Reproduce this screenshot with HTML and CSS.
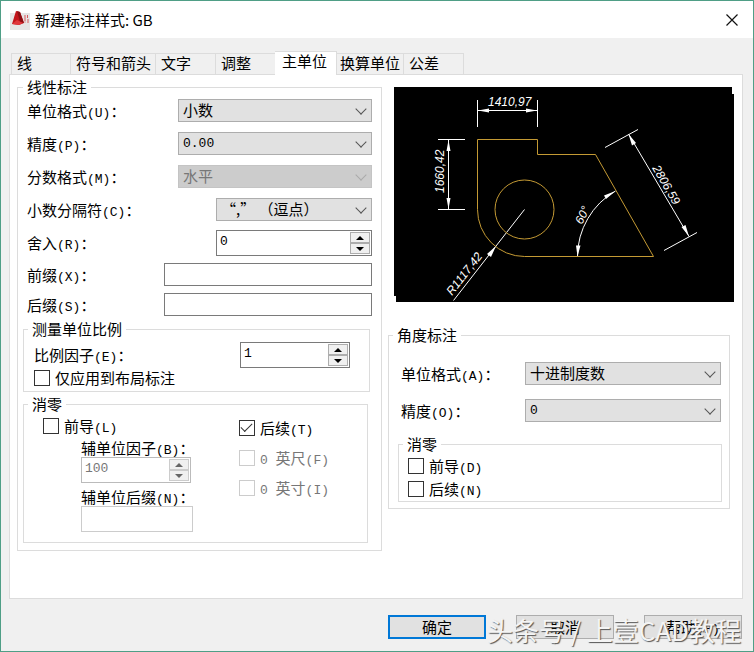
FILE: index.html
```html
<!DOCTYPE html>
<html lang="zh-CN">
<head>
<meta charset="utf-8">
<title>新建标注样式: GB</title>
<link rel="stylesheet" href="styles.css">
</head>
<body>
<main class="window">
  <header class="titlebar">
    <svg class="logo" viewBox="0 0 20 20" aria-hidden="true">
      <rect y="3" width="20" height="17" fill="#e6e6e6"/>
      <path d="M2 14 6 1l4 1 4 11-5 2z" fill="#c3151b"/>
      <path d="M7 1l3 1 4 11-4-1z" fill="#8d0f14"/>
      <path d="M2 14l5-4 6 3-4 2z" fill="#e0373c"/>
      <path d="M14 6h2M17.500 5v3M14 8h2M14 10h2M17 10h2M14.500 12h1M17 12h2" stroke="#d8585b" fill="none"/>
    </svg>
    <h1>新建标注样式: GB</h1>
    <button class="close" type="button" aria-label="关闭">
      <svg viewBox="0 0 12 12"><path d="M0.5 0.5l11 11M11.5 0.5l-11 11" stroke="#111" stroke-width="1.2"/></svg>
    </button>
  </header>

  <nav class="tabs" role="tablist">
    <button class="tab tab-short" type="button" role="tab">线</button>
    <button class="tab" type="button" role="tab">符号和箭头</button>
    <button class="tab tab-short" type="button" role="tab">文字</button>
    <button class="tab tab-short" type="button" role="tab">调整</button>
    <button class="tab tab-active" type="button" role="tab" aria-selected="true">主单位</button>
    <button class="tab tab-snug" type="button" role="tab">换算单位</button>
    <button class="tab tab-short" type="button" role="tab">公差</button>
  </nav>

  <section class="panel">
    <fieldset class="group linear">
      <legend>线性标注</legend>
      <div class="rows">
        <div class="row"><label for="lu">单位格式<span class="key">(U)</span>：</label>
          <span class="select w-wide"><select id="lu"><option>小数</option></select></span></div>
        <div class="row"><label for="lp">精度<span class="key">(P)</span>：</label>
          <span class="select w-wide"><select id="lp" class="num"><option>0.00</option></select></span></div>
        <div class="row"><label for="lm">分数格式<span class="key">(M)</span>：</label>
          <span class="select w-wide off"><select id="lm" disabled><option>水平</option></select></span></div>
        <div class="row"><label for="lc">小数分隔符<span class="key">(C)</span>：</label>
          <span class="select w-mid"><select id="lc"><option>“,” （逗点）</option></select></span></div>
      </div>
      <div class="rows rows-tight">
        <div class="row"><label for="lr">舍入<span class="key">(R)</span>：</label>
          <span class="spin w-mid"><input id="lr" type="text" value="0"><span class="arrows"><button type="button" class="up" aria-label="增加"></button><button type="button" class="down" aria-label="减少"></button></span></span></div>
        <div class="row"><label for="lx">前缀<span class="key">(X)</span>：</label><input id="lx" class="text w-full" type="text"></div>
        <div class="row"><label for="ls">后缀<span class="key">(S)</span>：</label><input id="ls" class="text w-full" type="text"></div>
      </div>

      <fieldset class="group scale">
        <legend>测量单位比例</legend>
        <div class="row"><label for="se">比例因子<span class="key">(E)</span>：</label>
          <span class="spin w-spin"><input id="se" type="text" value="1"><span class="arrows"><button type="button" class="up" aria-label="增加"></button><button type="button" class="down" aria-label="减少"></button></span></span></div>
        <label class="check"><input type="checkbox"><span>仅应用到布局标注</span></label>
      </fieldset>

      <fieldset class="group zero">
        <legend>消零</legend>
        <div class="zero-body">
          <div>
            <label class="check"><input type="checkbox"><span>前导<span class="key">(L)</span></span></label>
            <div class="sub">
              <label for="zb">辅单位因子<span class="key">(B)</span>：</label>
              <span class="spin w-spin off"><input id="zb" type="text" value="100" disabled><span class="arrows"><button type="button" class="up" aria-label="增加" disabled></button><button type="button" class="down" aria-label="减少" disabled></button></span></span>
            </div>
            <div class="sub">
              <label for="zn">辅单位后缀<span class="key">(N)</span>：</label>
              <input id="zn" class="text tall" type="text" disabled>
            </div>
          </div>
          <div class="zero-right">
            <label class="check"><input type="checkbox" checked><span>后续<span class="key">(T)</span></span></label>
            <label class="check off"><input type="checkbox" disabled><span><span class="key">0&nbsp;</span>英尺<span class="key">(F)</span></span></label>
            <label class="check off"><input type="checkbox" disabled><span><span class="key">0&nbsp;</span>英寸<span class="key">(I)</span></span></label>
          </div>
        </div>
      </fieldset>
    </fieldset>

    <div class="side">
      <figure class="preview">
        <svg viewBox="0 0 340 215" role="img" aria-label="标注预览">
          <path d="M0 0H338V7H340V215H2V209H0Z" fill="#000"/>
          <g fill="none" stroke="#fff">
            <path d="M83.5 13V40M143.5 13V40M84 23.5H143"/>
            <path d="M44 52.5H71M44 122.5H71M54.5 53V122"/>
            <path d="M130.5 122.5L59.5 213.5"/>
            <path d="M183.5 169.5A76 76 0 0 1 221.5 104"/>
            <path d="M211 60.5L244 42.5M270 163.5L303 145.5M234.5 47L295 149.5"/>
          </g>
          <g fill="none" stroke="#c49a34">
            <path d="M83.5 122.5V52.5H143.5V67.5H201.5L259.5 169.5H130.5A47 47 0 0 1 83.5 122.5"/>
            <circle cx="130.5" cy="122.5" r="29.5"/>
          </g>
          <g fill="#fff">
            <path d="M84 23.5l11-2v4zM143 23.5l-11-2v4z"/>
            <path d="M54.5 53l-2 11h4zM54.5 122l-2-11h4z"/>
            <path d="M102 159l-9 8 4 3z"/>
            <path d="M183.5 169.5l-1.500-11h4.500zM221.500 104l-11.500 4.500 2 3.500z"/>
            <path d="M234.500 47l3.500 11.500 4-2.500zM295 149.500l-7.500-9.500 4-2z"/>
          </g>
          <g class="dims">
            <text x="94" y="19">1410,97</text>
            <text transform="translate(50 106) rotate(-90)">1660,42</text>
            <text transform="translate(58 209) rotate(-52)">R1117,42</text>
            <text transform="translate(188 138) rotate(-64)">60°</text>
            <text transform="translate(258 81) rotate(60)">2806,59</text>
          </g>
        </svg>
      </figure>

      <fieldset class="group angle">
        <legend>角度标注</legend>
        <div class="row"><label for="au">单位格式<span class="key">(A)</span>：</label>
          <span class="select w-angle"><select id="au"><option>十进制度数</option></select></span></div>
        <div class="row"><label for="ap">精度<span class="key">(O)</span>：</label>
          <span class="select w-angle"><select id="ap" class="num"><option>0</option></select></span></div>
        <fieldset class="group angle-zero">
          <legend>消零</legend>
          <label class="check"><input type="checkbox"><span>前导<span class="key">(D)</span></span></label>
          <label class="check"><input type="checkbox"><span>后续<span class="key">(N)</span></span></label>
        </fieldset>
      </fieldset>
    </div>
  </section>

  <footer class="actions">
    <button class="btn btn-default" type="button">确定</button>
    <button class="btn" type="button">取消</button>
    <button class="btn" type="button">帮助<span class="key">(H)</span></button>
    <span class="watermark">头条号 / 上壹CAD教程</span>
  </footer>
</main>
</body>
</html>
```
FILE: styles.css
```css
* { box-sizing: border-box; }

body {
  margin: 0;
  color: #000;
  font: 15px/20px "Noto Sans CJK SC", sans-serif;
}

button, input, select {
  margin: 0;
  padding: 0;
  color: inherit;
  font: inherit;
}

.window {
  display: flex;
  flex-direction: column;
  min-height: 100vh;
  border: 1px solid #4f9e86;
  background: #f0f0f0;
}

.titlebar {
  display: flex;
  align-items: center;
  height: 37px;
  padding: 0 15px 0 9px;
  background: #fff;
}

.logo { width: 20px; height: 20px; }

.titlebar h1 {
  flex: 1;
  margin: 0 0 0 5px;
  font-size: 15px;
  font-weight: 400;
}

.close {
  display: flex;
  border: 0;
  background: none;
}

.close svg { width: 12px; height: 12px; }

.tabs {
  display: flex;
  align-items: flex-end;
  height: 36px;
  padding-left: 10px;
}

.tab {
  height: 21px;
  padding: 0 4px 3px 5px;
  border: 1px solid #dcdcdc;
  border-width: 1px 1px 0 0;
  background: #f0f0f0;
  line-height: 17px;
  text-align: left;
  white-space: nowrap;
}

.tab:first-child { border-left-width: 1px; }
.tab-short { width: 60px; }
.tab-snug { padding: 0 3px 3px; }

.tab-active {
  z-index: 1;
  height: 24px;
  margin: 0 0 -1px -1px;
  padding: 0 9px 6px 7px;
  background: #fff;
}

.panel {
  display: grid;
  flex: 1;
  grid-template-columns: 365fr 342fr;
  gap: 6px;
  align-items: start;
  margin: 0 10px 0 8px;
  padding: 2px 12px 40px 7px;
  border: 1px solid #dcdcdc;
  background: #fff;
}

.group {
  min-width: 0;
  margin: 0;
  padding: 0;
  border: 1px solid #dcdcdc;
}

.group > legend { padding: 0 4px; }

.row {
  display: flex;
  align-items: center;
  justify-content: space-between;
}

.key, .num { font-family: "Liberation Mono", monospace; font-size: 13px; }
.key { line-height: 1; }

.linear { padding: 2px 9px 7px; }
.linear > legend { margin-left: -4px; }
.rows { display: grid; gap: 10px; }
.rows-tight { gap: 7px; margin-top: 9px; }

.w-wide { width: 194px; }
.w-mid { width: 156px; }
.w-full { width: 208px; }
.w-spin { width: 110px; }
.w-angle { width: 196px; }

.select { position: relative; }

.select select {
  display: block;
  width: 100%;
  height: 23px;
  padding: 0 20px 2px 4px;
  border: 1px solid #adadad;
  border-radius: 0;
  background: #e1e1e1;
  appearance: none;
}

.select .num { padding-bottom: 0; }

.select::after {
  content: "";
  position: absolute;
  top: 6px;
  right: 7px;
  width: 7px;
  height: 7px;
  border: solid #555;
  border-width: 0 1px 1px 0;
  pointer-events: none;
  transform: rotate(45deg);
}

.select.off select {
  border-color: #c4c4c4;
  background: #ccc;
  color: #777;
  opacity: 1;
}

.select.off::after { border-color: #aaa; }

.text {
  height: 23px;
  padding: 0 4px;
  border: 1px solid #7a7a7a;
  background: #fff;
}

.tall { width: 112px; height: 26px; }
.text:disabled { border-color: #ccc; }

.spin {
  display: flex;
  height: 26px;
  padding: 1px;
  border: 1px solid #7a7a7a;
  background: #fff;
}

.spin input {
  flex: 1;
  min-width: 0;
  padding: 0 0 3px 2px;
  border: 0;
  background: none;
  font-family: "Liberation Mono", monospace;
  font-size: 13px;
}

.arrows {
  display: grid;
  grid-template-rows: 1fr 1fr;
  width: 20px;
}

.arrows button {
  display: grid;
  place-items: center;
  border: 1px solid #adadad;
  background: #f0f0f0;
}

.arrows button::before {
  content: "";
  border: 4px solid transparent;
}

.arrows .up::before { border-top-width: 0; border-bottom-color: #000; }
.arrows .down::before { border-bottom-width: 0; border-top-color: #000; }

.spin.off { border-color: #bbb; }
.spin.off input { color: #777; }
.spin.off button { border-color: #ccc; }
.spin.off .up::before { border-bottom-color: #666; }
.spin.off .down::before { border-top-color: #666; }

.check {
  display: flex;
  align-items: center;
  height: 16px;
}

.check input {
  display: grid;
  place-items: center;
  width: 16px;
  height: 16px;
  margin-right: 5px;
  border: 1px solid #333;
  background: #fff;
  appearance: none;
}

.check input:checked::before {
  content: "";
  width: 10px;
  height: 5px;
  margin-bottom: 4px;
  border: solid #333;
  border-width: 0 0 1px 1px;
  transform: rotate(-45deg);
}

.check.off { color: #777; }
.check.off input { border-color: #ccc; }

.scale {
  margin: 3px 2px 0 -4px;
  padding: 3px 19px 5px 10px;
}

.scale > legend { margin-left: -6px; }
.scale .check { margin-top: 2px; }

.zero {
  margin: 2px 4px 0 -4px;
  padding: 4px 38px 10px 19px;
}

.zero > legend { margin-left: -15px; }

.zero-body {
  display: flex;
  align-items: flex-start;
  justify-content: space-between;
}

.sub {
  display: grid;
  justify-items: start;
  margin: 5px 0 0 38px;
}

.sub label { height: 18px; line-height: 18px; }

.zero-right {
  display: grid;
  gap: 14px;
  margin-top: 2px;
}

.preview { margin: 10px -4px 0 6px; }
.preview svg { display: block; width: 100%; }

.dims {
  fill: #fff;
  font: italic 12px "Liberation Sans Narrow", "Liberation Sans", sans-serif;
}

.angle {
  margin-top: 23px;
  padding: 17px 8px 6px 12px;
}

.angle > legend { margin-left: -8px; }
.angle .row + .row { margin-top: 14px; }

.angle-zero {
  display: grid;
  gap: 7px;
  margin: 12px -1px 0 -3px;
  padding: 4px 9px;
}

.angle-zero > legend { margin-left: -5px; }

.actions {
  position: relative;
  display: flex;
  gap: 30px;
  justify-content: flex-end;
  padding: 16px 11px 12px;
}

.btn {
  width: 98px;
  height: 24px;
  border: 1px solid #adadad;
  background: #e1e1e1;
}

.btn-default { border: 2px solid #0078d7; }

.watermark {
  position: absolute;
  right: 12px;
  bottom: 3px;
  color: #f4f4f4;
  font-size: 26px;
  line-height: 36px;
  text-shadow: 1px 1px 1px #555;
  white-space: nowrap;
  pointer-events: none;
}
```
